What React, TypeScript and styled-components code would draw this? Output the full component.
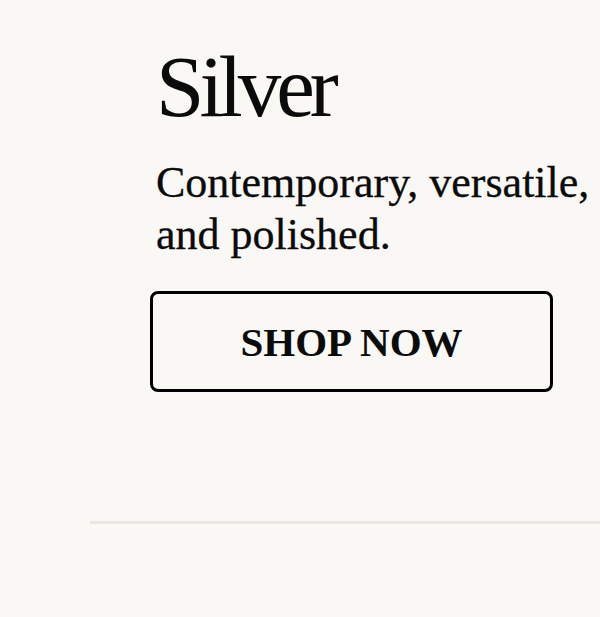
import React from "react";
import styled, { createGlobalStyle } from "styled-components";

const GlobalStyle = createGlobalStyle`
  html, body {
    margin: 0;
    padding: 0;
    background: #f9f8f5;
    overflow: hidden;
  }
  body {
    font-family: "Liberation Serif", "Times New Roman", serif;
    color: #0b0b0b;
  }
`;

const Page = styled.main`
  width: 600px;
  height: 617px;
  background: #f9f8f5;
  display: flex;
  flex-direction: column;
  padding-top: 38px;
  box-sizing: border-box;
`;

const Hero = styled.section`
  display: flex;
  flex-direction: column;
  align-items: flex-start;
  padding-left: 150px;
`;

const Title = styled.h1`
  margin: 0 0 0 6px;
  font-family: "Liberation Serif", "Times New Roman", serif;
  font-weight: 400;
  font-size: 87px;
  line-height: 98px;
  letter-spacing: -5px;
  color: #0b0b0b;
`;

const Tagline = styled.p`
  margin: 21px 0 0 6px;
  width: 440px;
  font-size: 44px;
  line-height: 52px;
  color: #0b0b0b;
  -webkit-text-stroke: 0.3px #0b0b0b;
`;

const ShopButton = styled.button`
  margin-top: 30px;
  width: 403px;
  height: 101px;
  box-sizing: border-box;
  border: 3px solid #000;
  border-radius: 8px;
  background: transparent;
  font-family: "Liberation Serif", "Times New Roman", serif;
  font-weight: 700;
  font-size: 41px;
  color: #0b0b0b;
  display: flex;
  align-items: center;
  justify-content: center;
  padding: 0;
  cursor: pointer;
`;

const Divider = styled.hr`
  margin: 129px 0 0 90px;
  border: none;
  height: 3px;
  background: #ebe6e0;
`;

export default function App() {
  return (
    <>
      <GlobalStyle />
      <Page>
        <Hero>
          <Title>Silver</Title>
          <Tagline>Contemporary, versatile, and polished.</Tagline>
          <ShopButton>SHOP NOW</ShopButton>
        </Hero>
        <Divider />
      </Page>
    </>
  );
}
